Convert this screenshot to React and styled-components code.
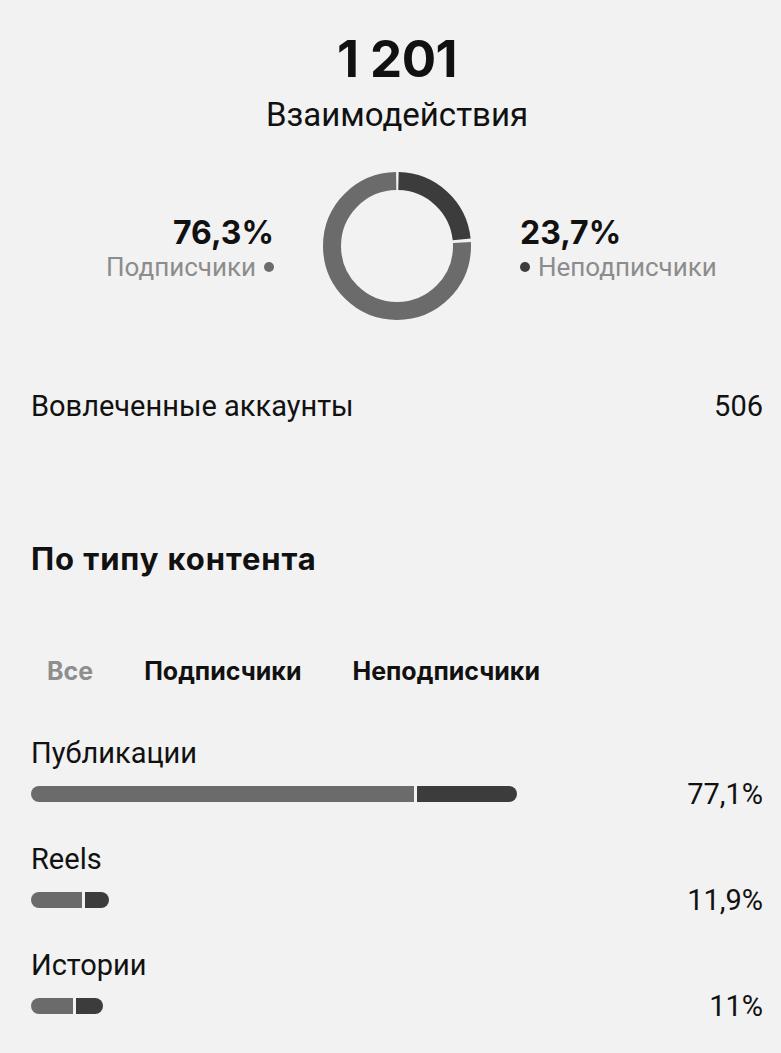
import React from "react";
import styled, { createGlobalStyle } from "styled-components";

const GlobalStyle = createGlobalStyle`
  html, body {
    margin: 0;
    padding: 0;
    background: #f2f2f2;
  }
  body {
    font-family: Roboto, "Liberation Sans", sans-serif;
    color: #111;
  }
`;

const BOLD_FONT = `Inter, Roboto, "Liberation Sans", sans-serif`;

const Page = styled.div`
  width: 781px;
  height: 1053px;
  box-sizing: border-box;
  padding: 30px 18px 0 31px;
  overflow: hidden;
`;

const Header = styled.div`
  display: flex;
  flex-direction: column;
  align-items: center;
`;

const Total = styled.div`
  font-family: ${BOLD_FONT};
  font-size: 51px;
  font-weight: 700;
  line-height: 58px;
  letter-spacing: -0.5px;
`;

const TotalLabel = styled.div`
  font-size: 33px;
  line-height: 36px;
  margin-top: 9px;
`;

const DonutRow = styled.div`
  display: grid;
  grid-template-columns: 1fr 150px 1fr;
  column-gap: 48px;
  align-items: center;
  margin-top: 38px;
`;

const Legend = styled.div`
  display: flex;
  flex-direction: column;
  align-items: ${(p) => (p.right ? "flex-start" : "flex-end")};
  margin-top: 4px;
`;

const LegendValue = styled.div`
  font-family: ${BOLD_FONT};
  font-size: 32px;
  font-weight: 700;
  line-height: 38px;
`;

const LegendName = styled.div`
  display: flex;
  align-items: center;
  gap: 8px;
  font-size: 26px;
  line-height: 30px;
  color: #8c8c8c;
`;

const Dot = styled.span`
  width: 10px;
  height: 10px;
  border-radius: 50%;
  background: ${(p) => p.color};
`;

const StatRow = styled.div`
  display: flex;
  justify-content: space-between;
  align-items: center;
  font-size: 29px;
  line-height: 34px;
  margin-top: 68px;
`;

const SectionTitle = styled.h2`
  margin: 119px 0 0;
  font-family: ${BOLD_FONT};
  font-size: 31px;
  font-weight: 700;
  line-height: 34px;
  letter-spacing: 0.9px;
`;

const Tabs = styled.div`
  display: flex;
  gap: 51px;
  padding-left: 16px;
  margin-top: 80px;
`;

const Tab = styled.div`
  font-family: ${BOLD_FONT};
  font-size: 25px;
  font-weight: 700;
  line-height: 30px;
  color: ${(p) => (p.active ? "#8e8e8e" : "#111")};
`;

const ContentList = styled.div`
  display: flex;
  flex-direction: column;
  gap: 31px;
  margin-top: 50px;
`;

const ContentItem = styled.div`
  display: flex;
  flex-direction: column;
`;

const ContentName = styled.div`
  font-size: 29px;
  line-height: 34px;
`;

const BarLine = styled.div`
  display: flex;
  align-items: center;
  justify-content: space-between;
  margin-top: 7px;
`;

const Bar = styled.div`
  display: flex;
  gap: 3px;
  height: 16px;
`;

const Segment = styled.div`
  height: 100%;
  background: ${(p) => (p.dark ? "#3c3c3c" : "#6b6b6b")};
  border-radius: ${(p) => (p.dark ? "0 8px 8px 0" : "8px 0 0 8px")};
`;

const Percent = styled.div`
  font-size: 29px;
  line-height: 34px;
`;

const LIGHT = "#6b6b6b";
const DARK = "#3c3c3c";

const Donut = () => {
  const r = 65;
  const c = 2 * Math.PI * r;
  const gap = 3;
  const darkLen = c * 0.237 - gap;
  const lightLen = c * 0.763 - gap;
  return (
    <svg width="150" height="150" viewBox="0 0 150 150">
      <g transform="rotate(-90 75 75)">
        <circle
          cx="75"
          cy="75"
          r={r}
          fill="none"
          stroke={DARK}
          strokeWidth="18"
          strokeDasharray={`${darkLen} ${c}`}
          strokeDashoffset={-gap / 2}
        />
        <circle
          cx="75"
          cy="75"
          r={r}
          fill="none"
          stroke={LIGHT}
          strokeWidth="18"
          strokeDasharray={`${lightLen} ${c}`}
          strokeDashoffset={-(c * 0.237 + gap / 2)}
        />
      </g>
    </svg>
  );
};

const content = [
  { name: "Публикации", light: 383, dark: 100, value: "77,1%" },
  { name: "Reels", light: 51, dark: 24, value: "11,9%" },
  { name: "Истории", light: 42, dark: 27, value: "11%" },
];

const App = () => (
  <Page>
    <GlobalStyle />
    <Header>
      <Total>1 201</Total>
      <TotalLabel>Взаимодействия</TotalLabel>
    </Header>

    <DonutRow>
      <Legend>
        <LegendValue>76,3%</LegendValue>
        <LegendName>
          Подписчики <Dot color={LIGHT} />
        </LegendName>
      </Legend>
      <Donut />
      <Legend right>
        <LegendValue>23,7%</LegendValue>
        <LegendName>
          <Dot color={DARK} /> Неподписчики
        </LegendName>
      </Legend>
    </DonutRow>

    <StatRow>
      <span>Вовлеченные аккаунты</span>
      <span>506</span>
    </StatRow>

    <SectionTitle>По типу контента</SectionTitle>

    <Tabs>
      <Tab active>Все</Tab>
      <Tab>Подписчики</Tab>
      <Tab>Неподписчики</Tab>
    </Tabs>

    <ContentList>
      {content.map((item) => (
        <ContentItem key={item.name}>
          <ContentName>{item.name}</ContentName>
          <BarLine>
            <Bar>
              <Segment style={{ width: item.light }} />
              <Segment dark style={{ width: item.dark }} />
            </Bar>
            <Percent>{item.value}</Percent>
          </BarLine>
        </ContentItem>
      ))}
    </ContentList>
  </Page>
);

export default App;
